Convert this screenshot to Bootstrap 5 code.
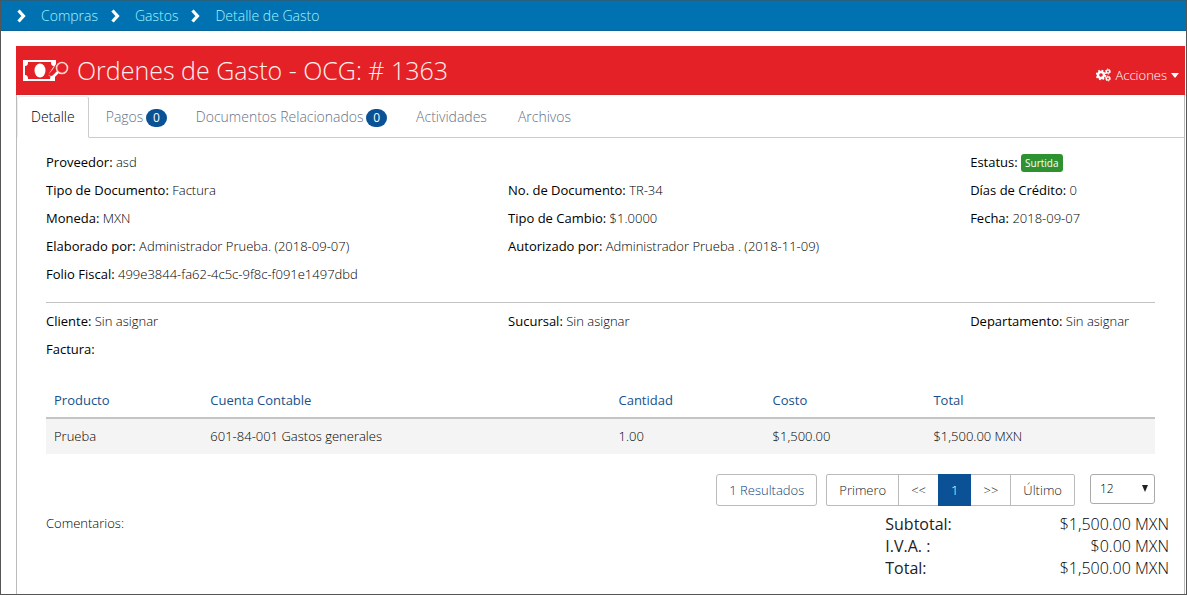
<!DOCTYPE html>
<html lang="es">
<head>
<meta charset="utf-8">
<meta name="viewport" content="width=device-width, initial-scale=1">
<title>Detalle de Gasto</title>
<link href="https://cdn.jsdelivr.net/npm/bootstrap@5.3.0/dist/css/bootstrap.min.css" rel="stylesheet">
<style>
  body { font-family: "Open Sans", sans-serif; font-size: 13px; font-weight: 300; line-height: 20px; color: #000; border: 1px solid #555; border-top-color: #27617f; }
  .crumbs { background: #0072b1; min-height: 30px; padding-left: 15px; font-size: 14px; border-bottom: 1px solid #0b6497; }
  .crumbs a { color: #a4f5ff; font-weight: 300; margin-left: 13px; margin-right: 12px; }
  .crumbs ol { list-style: none; }
  .page-body { padding: 15px 1px 0 15px; }
  .title-bar { background: #e32126; color: #fff; height: 49px; padding: 0 6px 0 7px; border-bottom: 1px solid #cf2429; }
  .title-bar h1 { font-size: 25px; font-weight: 300; line-height: 36px; color: #fff0ee; }
  .title-bar .btn { color: #fff; font-size: 13px; font-weight: 300; line-height: 20px; margin-bottom: 9px; }
  .panel { border: 1px solid #bbb; border-top: 0; border-bottom: 0; }
  .nav-tabs { border-bottom-color: #ccc; gap: 3px; padding-top: 1px; --bs-nav-tabs-border-radius: 3px; }
  .nav-tabs .nav-link { font-size: 14px; font-weight: 300; line-height: 20px; padding: 10px 13px; color: #667085; }
  .nav-tabs .nav-link.active { color: #000; border-color: #eee #ccc #fff #eee; }
  .nav-tabs .badge { background: #0a5295; font-size: 12px; font-weight: 400; line-height: 12px; padding: 3px 7px; border-radius: 10px; margin: 0 -2px 0 -1px; }
  .panel-content { padding: 10px 29px 0; }
  .facts > div { min-height: 28px; padding: 4px 0; }
  .facts b { font-weight: 400; color: #000; }
  .estado { background: #2f9231; font-size: 10px; font-weight: 400; line-height: 12px; padding: 3px 4px; border-radius: 3px; }
  .divider { border-color: #999; margin: 14px 0 4px; opacity: .6; }
  .items { margin: 20px 0; table-layout: fixed; --bs-table-color: #000; --bs-table-striped-bg: #f4f4f4; --bs-table-striped-color: #000; }
  .items th { font-weight: 400; color: #17508a; padding: 7px 8px; border-bottom: 2px solid #c4c4c4; }
  .items td { padding: 7px 8px 8px; border-bottom: 0; }
  .c-prod { width: 14.1%; } .c-cuenta { width: 36.8%; } .c-cant { width: 13.9%; } .c-costo { width: 14.5%; }
  .pagination .page-link, .results { font-size: 13px; font-weight: 300; line-height: 20px; padding: 5px 12px; color: #222; border: 1px solid #bbb; border-radius: 3px; }
  .results { color: #0a427c; margin-right: 9px; }
  .pagination { --bs-pagination-border-radius: 2px; margin: 0 15px 0 0; }
  .pagination .page-link { border-radius: 0; }
  .pagination .active .page-link { background: #0a5295; border-color: #0a5295; color: #fff; }
  .page-size { width: 65px; height: 30px; font-size: 12px; font-weight: 300; padding: 2px 9px; color: #000; border: 1px solid #aaa; border-radius: 3px; background: url("data:image/svg+xml,%3Csvg xmlns='http://www.w3.org/2000/svg' viewBox='0 0 8 8'%3E%3Cpath d='M1 0h6L4 7z' fill='%23222'/%3E%3C/svg%3E") no-repeat right 5px center / 8px 8px; }
  .totals { margin-right: -15px; margin-left: -15px; padding-top: 7px; }
  .totals .remarks { padding-left: 15px; }
  .sums { font-size: 16px; line-height: 22px; }
  .sums th { font-weight: 400; color: #222; padding: 0; }
  .sums td { padding: 0 1px 0 0; text-align: right; }
</style>
</head>
<body class="d-flex flex-column min-vh-100">
<nav class="crumbs d-flex align-items-center" aria-label="Ruta">
  <ol class="d-flex m-0 p-0">
    <li class="d-flex align-items-center"><svg width="12" height="14" viewBox="0 0 12 14"><path d="M2.500 1.500L7.500 7l-5 5.500" fill="none" stroke="#fff" stroke-width="3.200"/></svg><a class="text-decoration-none" href="#">Compras</a></li>
    <li class="d-flex align-items-center"><svg width="12" height="14" viewBox="0 0 12 14"><path d="M2.500 1.500L7.500 7l-5 5.500" fill="none" stroke="#fff" stroke-width="3.200"/></svg><a class="text-decoration-none" href="#">Gastos</a></li>
    <li class="d-flex align-items-center"><svg width="12" height="14" viewBox="0 0 12 14"><path d="M2.500 1.500L7.500 7l-5 5.500" fill="none" stroke="#fff" stroke-width="3.200"/></svg><a class="text-decoration-none" href="#">Detalle de Gasto</a></li>
  </ol>
</nav>
<main class="page-body d-flex flex-column flex-grow-1">
  <header class="title-bar d-flex justify-content-between align-items-center">
    <div class="d-flex align-items-center">
      <svg width="46" height="24" viewBox="0 0 46 24" aria-hidden="true">
        <path fill="#fff" fill-rule="evenodd" d="M0 2h33v4l-3 5-5 6 3 1 4-1v6H0zM5 4c0 3-1 4-3 4v9c2 0 3 1 3 4h22c0-1 0-1 1-2l-3-2 6-9c-2 0-3-1-3-4z"/>
        <ellipse cx="17" cy="12.500" rx="5.500" ry="7" fill="#fff"/>
        <circle cx="39" cy="10" r="5.500" fill="#e32126" stroke="#ffd5d0" stroke-width="1.600"/>
        <path d="M35 14l-7 7" stroke="#fff" stroke-width="2.500"/>
      </svg>
      <h1 class="my-0 ms-2">Ordenes de Gasto - OCG: # 1363</h1>
    </div>
    <button type="button" class="btn d-flex align-items-center align-self-end p-0 border-0">
      <svg width="15" height="14" viewBox="0 0 15 14" aria-hidden="true">
        <circle cx="5" cy="7" r="3" fill="none" stroke="#fff" stroke-width="2.400"/>
        <circle cx="5" cy="7" r="4.500" fill="none" stroke="#fff" stroke-width="1.600" stroke-dasharray="1.770 1.770"/>
        <g fill="none" stroke="#fff"><circle cx="12" cy="3.500" r="1.600" stroke-width="1.400"/><circle cx="12" cy="3.500" r="2.500" stroke-dasharray="1.300 1.300"/><circle cx="12" cy="10.500" r="1.600" stroke-width="1.400"/><circle cx="12" cy="10.500" r="2.500" stroke-dasharray="1.300 1.300"/></g>
      </svg>
      <span class="mx-1 ps-0">Acciones</span>
      <svg width="8" height="5" viewBox="0 0 8 5" aria-hidden="true"><path d="M0 0h8L4 5z" fill="#fff"/></svg>
    </button>
  </header>
  <section class="panel flex-grow-1">
    <ul class="nav nav-tabs">
      <li class="nav-item"><a class="nav-link active" href="#">Detalle</a></li>
      <li class="nav-item"><a class="nav-link" href="#">Pagos <span class="badge">0</span></a></li>
      <li class="nav-item"><a class="nav-link" href="#">Documentos Relacionados <span class="badge">0</span></a></li>
      <li class="nav-item"><a class="nav-link" href="#">Actividades</a></li>
      <li class="nav-item"><a class="nav-link" href="#">Archivos</a></li>
    </ul>
    <div class="panel-content">
      <div class="row g-0 facts">
        <div class="col-10"><b>Proveedor:</b> asd</div>
        <div class="col-2"><b>Estatus:</b> <span class="badge estado">Surtida</span></div>
        <div class="col-5"><b>Tipo de Documento:</b> Factura</div>
        <div class="col-5"><b>No. de Documento:</b> TR-34</div>
        <div class="col-2"><b>Días de Crédito:</b> 0</div>
        <div class="col-5"><b>Moneda:</b> MXN</div>
        <div class="col-5"><b>Tipo de Cambio:</b> $1.0000</div>
        <div class="col-2"><b>Fecha:</b> 2018-09-07</div>
        <div class="col-5"><b>Elaborado por:</b> Administrador Prueba. (2018-09-07)</div>
        <div class="col-7"><b>Autorizado por:</b> Administrador Prueba . (2018-11-09)</div>
        <div class="col-12"><b>Folio Fiscal:</b> 499e3844-fa62-4c5c-9f8c-f091e1497dbd</div>
      </div>
      <hr class="divider">
      <div class="row g-0 facts">
        <div class="col-5"><b>Cliente:</b> Sin asignar</div>
        <div class="col-5"><b>Sucursal:</b> Sin asignar</div>
        <div class="col-2"><b>Departamento:</b> Sin asignar</div>
        <div class="col-12"><b>Factura:</b></div>
      </div>
      <table class="table table-striped items">
        <thead><tr><th class="c-prod">Producto</th><th class="c-cuenta">Cuenta Contable</th><th class="c-cant">Cantidad</th><th class="c-costo">Costo</th><th>Total</th></tr></thead>
        <tbody><tr><td>Prueba</td><td>601-84-001 Gastos generales</td><td>1.00</td><td>$1,500.00</td><td>$1,500.00 MXN</td></tr></tbody>
      </table>
      <div class="d-flex justify-content-end align-items-start">
        <button type="button" class="btn results">1 Resultados</button>
        <nav aria-label="Páginas">
          <ul class="pagination">
            <li class="page-item"><a class="page-link" href="#">Primero</a></li>
            <li class="page-item"><a class="page-link" href="#">&lt;&lt;</a></li>
            <li class="page-item active"><a class="page-link" href="#">1</a></li>
            <li class="page-item"><a class="page-link" href="#">&gt;&gt;</a></li>
            <li class="page-item"><a class="page-link" href="#">Último</a></li>
          </ul>
        </nav>
        <select class="form-select page-size" aria-label="Resultados por página"><option>12</option><option>24</option></select>
      </div>
      <div class="row g-0 totals">
        <div class="col-9 remarks">Comentarios:</div>
        <div class="col-3">
          <table class="w-100 sums">
            <tr><th scope="row">Subtotal:</th><td>$1,500.00 MXN</td></tr>
            <tr><th scope="row">I.V.A. :</th><td>$0.00 MXN</td></tr>
            <tr><th scope="row">Total:</th><td>$1,500.00 MXN</td></tr>
          </table>
        </div>
      </div>
    </div>
  </section>
</main>
<script src="https://cdn.jsdelivr.net/npm/bootstrap@5.3.0/dist/js/bootstrap.bundle.min.js"></script>
</body>
</html>
